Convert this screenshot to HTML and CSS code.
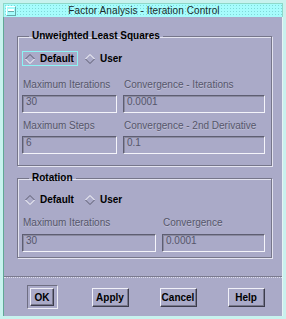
FILE: index.html
```html
<!DOCTYPE html>
<html lang="en">
<head>
  <meta charset="UTF-8">
  <title>Factor Analysis - Iteration Control</title>
  <link rel="stylesheet" href="styles.css">
</head>
<body>
  <div class="frame">
    <div class="titlebar">
      <span class="menubtn"><span class="bar"></span></span>
      <span class="title">Factor Analysis - Iteration Control</span>
    </div>
    <div class="client">
      <fieldset class="group g1">
        <legend>Unweighted Least Squares</legend>
        <div class="radios">
          <label class="radio on focus">
            <svg width="10" height="10" viewBox="0 0 10 10"><polygon points="5,0.5 9.5,5 5,9.5 0.5,5" fill="#aaaac8"/><polyline points="0.5,5 5,0.5 9.5,5" fill="none" stroke="#5a5a6e"/><polyline points="0.5,5 5,9.5 9.5,5" fill="none" stroke="#fff"/></svg>
            Default
          </label>
          <label class="radio">
            <svg width="10" height="10" viewBox="0 0 10 10"><polygon points="5,0.5 9.5,5 5,9.5 0.5,5" fill="#aaaac8"/><polyline points="0.5,5 5,0.5 9.5,5" fill="none" stroke="#fff"/><polyline points="0.5,5 5,9.5 9.5,5" fill="none" stroke="#5a5a6e"/></svg>
            User
          </label>
        </div>
        <div class="fields cols1">
          <div class="field">
            <span class="lbl">Maximum Iterations</span>
            <div class="input">30</div>
          </div>
          <div class="field">
            <span class="lbl">Convergence - Iterations</span>
            <div class="input">0.0001</div>
          </div>
          <div class="field">
            <span class="lbl">Maximum Steps</span>
            <div class="input">6</div>
          </div>
          <div class="field">
            <span class="lbl">Convergence - 2nd Derivative</span>
            <div class="input">0.1</div>
          </div>
        </div>
      </fieldset>

      <fieldset class="group g2">
        <legend>Rotation</legend>
        <div class="radios">
          <label class="radio on">
            <svg width="10" height="10" viewBox="0 0 10 10"><polygon points="5,0.5 9.5,5 5,9.5 0.5,5" fill="#aaaac8"/><polyline points="0.5,5 5,0.5 9.5,5" fill="none" stroke="#5a5a6e"/><polyline points="0.5,5 5,9.5 9.5,5" fill="none" stroke="#fff"/></svg>
            Default
          </label>
          <label class="radio">
            <svg width="10" height="10" viewBox="0 0 10 10"><polygon points="5,0.5 9.5,5 5,9.5 0.5,5" fill="#aaaac8"/><polyline points="0.5,5 5,0.5 9.5,5" fill="none" stroke="#fff"/><polyline points="0.5,5 5,9.5 9.5,5" fill="none" stroke="#5a5a6e"/></svg>
            User
          </label>
        </div>
        <div class="fields cols2">
          <div class="field">
            <span class="lbl">Maximum Iterations</span>
            <div class="input">30</div>
          </div>
          <div class="field">
            <span class="lbl">Convergence</span>
            <div class="input">0.0001</div>
          </div>
        </div>
      </fieldset>

      <div class="sep"></div>

      <div class="buttons">
        <span class="default-frame"><button class="btn ok">OK</button></span>
        <button class="btn">Apply</button>
        <button class="btn">Cancel</button>
        <button class="btn">Help</button>
      </div>
    </div>
  </div>
</body>
</html>
```

FILE: styles.css
```css
html, body { margin:0; background:#c8f2ee; }
.frame { width:286px; height:319px; box-sizing:border-box;
         padding:3px 3px 3px 3px; background:#c8f2ee;
         display:flex; flex-direction:column; }
.titlebar { height:13px; display:flex; align-items:center; position:relative;
            background:#a6fcfc;
            background-image:radial-gradient(#7fd8d8 0.6px, transparent 0.8px);
            background-size:3px 3px;
            border:1px solid #8ed8c8; border-bottom:none; }
.menubtn { width:10px; height:10px; margin-left:2px; box-sizing:border-box;
           border:1px solid #fff; border-right-color:#6aa; border-bottom-color:#6aa;
           display:flex; align-items:center; justify-content:center; background:#a6fcfc; }
.menubtn .bar { width:6px; height:2px; background:#fff; border-bottom:1px solid #6aa; }
.title { flex:1; text-align:center; font:10px "Liberation Sans", sans-serif;
         color:#1a2a2a; letter-spacing:0.1px; margin-right:10px; }
.client { flex:1; background:#aaaac8; border-left:1px solid #5fa896;
          border-right:1px solid #e8f4f4; display:flex; flex-direction:column; }

.group { margin:13px 10px 0 13px; padding:0 7px 0 4px;
         border:1px solid #76768a;
         box-shadow:inset 1px 1px 0 #e4e4f0, 1px 1px 0 #e4e4f0;
         min-width:0; }
.group legend { font:bold 10px "Liberation Sans", sans-serif; color:#000;
                padding:0 3px; margin-left:7px; line-height:12px; }
.g1 { padding-bottom:11px; }
.g2 { margin-top:6px; padding-bottom:5px; }

.radios { display:flex; align-items:center; gap:4px; height:15px; }
.g1 .radios { margin-top:9px; }
.g2 .radios { margin-top:8px; }
.radio { display:flex; align-items:center; gap:5px; height:15px; box-sizing:border-box;
         padding:0 3px 0 2px; border:1px solid transparent;
         font:bold 10px "Liberation Sans", sans-serif; color:#000; }
.radio.focus { border-color:#8cf4f4; }

.fields { display:grid; column-gap:6px; row-gap:7px; }
.cols1 { grid-template-columns:95px 142px; margin-top:13px; }
.cols2 { grid-template-columns:134px 103px; margin-top:10px; }
.field { display:flex; flex-direction:column; }
.lbl { font:10px "Liberation Sans", sans-serif; color:#56566a; line-height:12px;
       padding-left:1px; margin-bottom:4px; white-space:nowrap;
       text-shadow:0 1px 0 rgba(255,255,255,0.25); }
.cols2 .lbl { margin-bottom:5px; }
.input { height:18px; box-sizing:border-box; padding:0 3px; line-height:16px;
         border:1px solid; border-color:#5e5e72 #f4f4fa #f4f4fa #5e5e72;
         box-shadow:inset 1px 1px 0 #8a8aa0;
         font:10px "Liberation Sans", sans-serif; color:#56566a; }

.sep { margin-top:18px; height:0; border-top:1px solid #7a7a8e;
       border-bottom:1px dotted #e0e0ee; }

.buttons { display:grid; grid-template-columns:repeat(4,68px);
           justify-items:center; align-items:center; padding-left:4px;
           margin-top:7px; height:24px; }
.btn { font:bold 10px "Liberation Sans", sans-serif; color:#000; cursor:pointer;
       height:19px; width:37px; padding:0; background:#aaaac8;
       border:1px solid; border-color:#f0f0f8 #3c3c4c #3c3c4c #f0f0f8;
       box-shadow:inset -1px -1px 0 #78788c; }
.default-frame { display:flex; align-items:center; justify-content:center;
                 width:31px; height:24px; box-sizing:border-box;
                 border:1px solid; border-color:#6e6e82 #eeeef6 #eeeef6 #6e6e82; }
.btn.ok { width:24px; height:18px; }
```
